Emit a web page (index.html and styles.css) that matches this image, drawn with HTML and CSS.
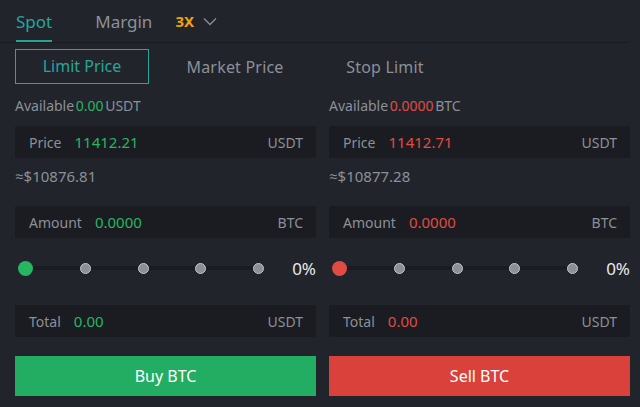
FILE: index.html
```html
<!DOCTYPE html>
<html lang="en">
<head>
  <meta charset="UTF-8" />
  <title>Spot Trade</title>
  <link rel="stylesheet" href="styles.css">
</head>
<body>

<div class="tabs">
  <div class="tab active">Spot</div>
  <div class="tab">Margin</div>
  <div class="lever">3X
    <svg width="14" height="9" viewBox="0 0 14 9"><path d="M1 1.5 L7 7.5 L13 1.5" fill="none" stroke="#8a8e96" stroke-width="1.3"/></svg>
  </div>
</div>

<div class="types">
  <div class="type active">Limit Price</div>
  <div class="type">Market Price</div>
  <div class="type">Stop Limit</div>
</div>

<div class="cols">
  <div class="col buy">
    <div class="avail">Available <span class="up">0.00</span> USDT</div>
    <div class="field"><span class="lbl">Price</span><span class="val up">11412.21</span><span class="unit">USDT</span></div>
    <div class="approx">≈$10876.81</div>
    <div class="field"><span class="lbl">Amount</span><span class="val up">0.0000</span><span class="unit">BTC</span></div>
    <div class="slider">
      <div class="track">
        <span class="knob green"></span>
        <span class="dot"></span>
        <span class="dot"></span>
        <span class="dot"></span>
        <span class="dot"></span>
      </div>
      <div class="pct">0%</div>
    </div>
    <div class="field"><span class="lbl">Total</span><span class="val up">0.00</span><span class="unit">USDT</span></div>
    <button class="btn btn-buy">Buy BTC</button>
  </div>

  <div class="col sell">
    <div class="avail">Available <span class="down">0.0000</span> BTC</div>
    <div class="field"><span class="lbl">Price</span><span class="val down">11412.71</span><span class="unit">USDT</span></div>
    <div class="approx">≈$10877.28</div>
    <div class="field"><span class="lbl">Amount</span><span class="val down">0.0000</span><span class="unit">BTC</span></div>
    <div class="slider">
      <div class="track">
        <span class="knob red"></span>
        <span class="dot"></span>
        <span class="dot"></span>
        <span class="dot"></span>
        <span class="dot"></span>
      </div>
      <div class="pct">0%</div>
    </div>
    <div class="field"><span class="lbl">Total</span><span class="val down">0.00</span><span class="unit">USDT</span></div>
    <button class="btn btn-sell">Sell BTC</button>
  </div>
</div>

</body>
</html>
```

FILE: styles.css
```css
body {
  margin: 0;
  font-family: 'Noto Sans', 'Open Sans', sans-serif;
  background: #21242b;
  color: #8c9098;
  padding: 0 10px 0 15px;
  height: 407px;
  overflow: hidden;
}
.tabs {
  display: flex;
  align-items: center;
  height: 42px;
  border-bottom: 1px solid #1a1c21;
  margin-left: -15px;
  padding-left: 16px;
}
.tab {
  font-size: 17px;
  height: 42px;
  line-height: 44px;
  box-sizing: border-box;
  margin-right: 23px;
  color: #8c9098;
}
.tab.active {
  color: #26a69a;
  border-bottom: 2px solid #26a69a;
  margin-right: 43px;
}
.lever {
  display: flex;
  align-items: center;
  gap: 9px;
  font-size: 15px;
  font-weight: bold;
  color: #f0a30a;
}
.types {
  display: flex;
  align-items: center;
  margin-top: 6px;
  height: 35px;
}
.type {
  font-size: 16px;
  color: #8c9098;
  width: 150px;
  text-align: center;
  letter-spacing: 0.2px;
}
.type.active {
  box-sizing: border-box;
  width: 134px;
  height: 35px;
  line-height: 33px;
  border: 1px solid #26a69a;
  color: #26a69a;
  margin-right: 11px;
  letter-spacing: 0;
}
.cols {
  display: grid;
  grid-template-columns: 301px 301px;
  column-gap: 13px;
  margin-top: 10px;
}
.avail {
  font-size: 14px;
  height: 20px;
  line-height: 24px;
  color: #8c9098;
  word-spacing: -2px;
}
.up { color: #26b561; }
.down { color: #e04b43; }
.field {
  display: flex;
  align-items: center;
  height: 32px;
  margin-top: 12px;
  background: #1a1c21;
  border-radius: 2px;
  padding: 0 13px 0 14px;
  font-size: 14px;
}
.lbl { color: #8c9098; margin-right: 13px; }
.val { flex: 1; font-size: 15px; }
.unit { color: #8c9098; }
.approx {
  font-size: 15px;
  height: 36px;
  line-height: 36px;
  color: #8c9098;
}
.slider {
  display: flex;
  align-items: center;
  height: 56px;
  margin-top: 2px;
}
.slider + .field {
  margin-top: 9px;
}
.track {
  width: 246px;
  display: flex;
  justify-content: space-between;
  align-items: center;
  margin-left: 3px;
  height: 4px;
  background: #1a1c21;
}
.knob {
  width: 15px;
  height: 15px;
  border-radius: 50%;
}
.knob.green { background: #26b561; }
.knob.red { background: #e04b43; }
.dot {
  width: 9px;
  height: 9px;
  border-radius: 50%;
  background: #8d8f94;
  border: 1px solid #c4c6ca;
}
.pct {
  font-size: 17px;
  color: #e9eaec;
  margin-left: auto;
}
.btn {
  display: block;
  width: 100%;
  height: 40px;
  margin-top: 19px;
  border: none;
  font-family: inherit;
  font-size: 16px;
  color: #ffffff;
  cursor: pointer;
}
.btn-buy { background: #22ad62; }
.btn-sell { background: #d9413a; }
```
